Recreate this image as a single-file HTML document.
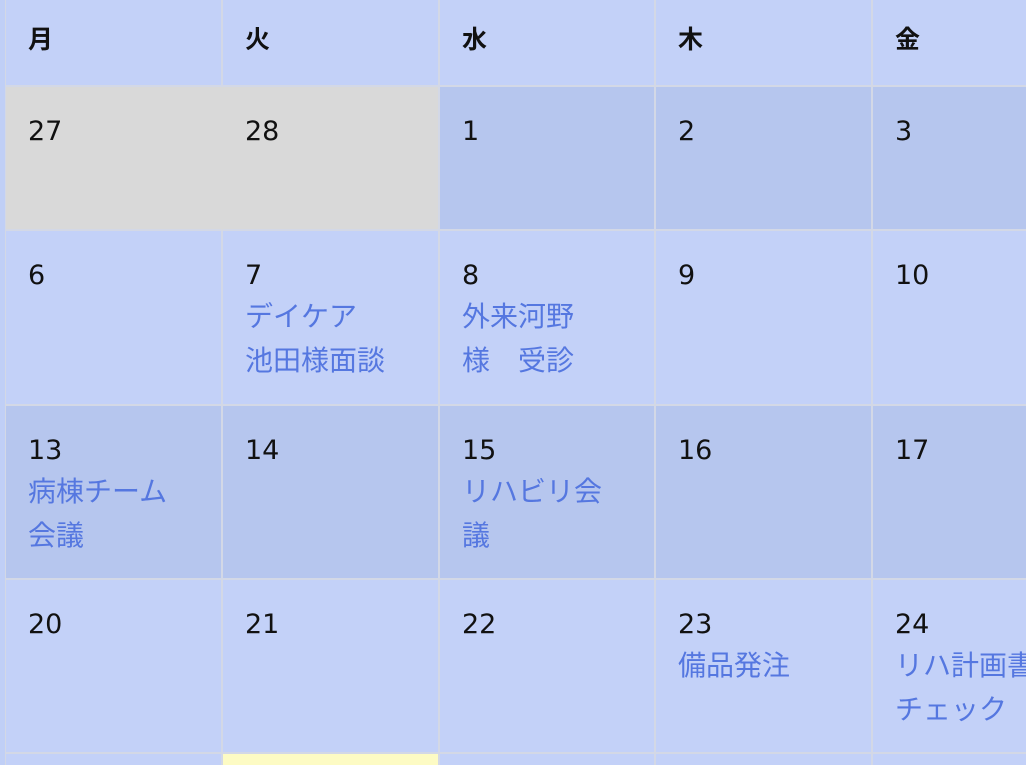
<!DOCTYPE html>
<html><head><meta charset="utf-8"><style>
html,body{margin:0;width:1026px;height:765px;overflow:hidden}
body{background:#c3d1f8;font-family:"DejaVu Sans","Noto Sans CJK JP",sans-serif;position:relative}
.c{position:absolute;box-sizing:border-box;padding:23px 0 0 22px;font-size:27px;line-height:44px;color:#111;border-right:2px solid #d3d8e6;border-bottom:2px solid #d3d8e6;background:#c3d1f8}
.h{padding-top:18px;font-weight:bold;font-size:25px}
.g{background:#d9d9d9}
.d{background:#b6c6ee}
.y{background:#fdfbc4}
.e{color:#5577e0;font-size:28px;white-space:nowrap;font-family:"Noto Sans CJK JP",sans-serif}
.c>.e:nth-child(1){margin-top:-5px}
.lb{position:absolute;left:0;top:0;width:5px;height:765px;background:#c0cff6;border-right:2px solid #d3d8e6}
</style></head><body>
<div class="lb"></div>
<div class="c h" style="left:6px;top:0;width:217px;height:87px">月</div>
<div class="c h" style="left:223px;top:0;width:217px;height:87px">火</div>
<div class="c h" style="left:440px;top:0;width:216px;height:87px">水</div>
<div class="c h" style="left:656px;top:0;width:217px;height:87px">木</div>
<div class="c h" style="left:873px;top:0;width:217px;height:87px">金</div>

<div class="c g" style="left:6px;top:87px;width:217px;height:144px;border-right-color:#d9d9d9">27</div>
<div class="c g" style="left:223px;top:87px;width:217px;height:144px">28</div>
<div class="c d" style="left:440px;top:87px;width:216px;height:144px">1</div>
<div class="c d" style="left:656px;top:87px;width:217px;height:144px">2</div>
<div class="c d" style="left:873px;top:87px;width:217px;height:144px">3</div>

<div class="c" style="left:6px;top:231px;width:217px;height:175px">6</div>
<div class="c" style="left:223px;top:231px;width:217px;height:175px">7<div class="e">デイケア</div><div class="e">池田様面談</div></div>
<div class="c" style="left:440px;top:231px;width:216px;height:175px">8<div class="e">外来河野</div><div class="e">様　受診</div></div>
<div class="c" style="left:656px;top:231px;width:217px;height:175px">9</div>
<div class="c" style="left:873px;top:231px;width:217px;height:175px">10</div>

<div class="c d" style="left:6px;top:406px;width:217px;height:174px">13<div class="e">病棟チーム</div><div class="e">会議</div></div>
<div class="c d" style="left:223px;top:406px;width:217px;height:174px">14</div>
<div class="c d" style="left:440px;top:406px;width:216px;height:174px">15<div class="e">リハビリ会</div><div class="e">議</div></div>
<div class="c d" style="left:656px;top:406px;width:217px;height:174px">16</div>
<div class="c d" style="left:873px;top:406px;width:217px;height:174px">17</div>

<div class="c" style="left:6px;top:580px;width:217px;height:174px">20</div>
<div class="c" style="left:223px;top:580px;width:217px;height:174px">21</div>
<div class="c" style="left:440px;top:580px;width:216px;height:174px">22</div>
<div class="c" style="left:656px;top:580px;width:217px;height:174px">23<div class="e">備品発注</div></div>
<div class="c" style="left:873px;top:580px;width:217px;height:174px">24<div class="e">リハ計画書</div><div class="e">チェック</div></div>

<div class="c" style="left:6px;top:754px;width:217px;height:11px;border-bottom:0"></div>
<div class="c y" style="left:223px;top:754px;width:217px;height:11px;border-bottom:0"></div>
<div class="c" style="left:440px;top:754px;width:216px;height:11px;border-bottom:0"></div>
<div class="c" style="left:656px;top:754px;width:217px;height:11px;border-bottom:0"></div>
<div class="c" style="left:873px;top:754px;width:217px;height:11px;border-bottom:0"></div>
</body></html>
